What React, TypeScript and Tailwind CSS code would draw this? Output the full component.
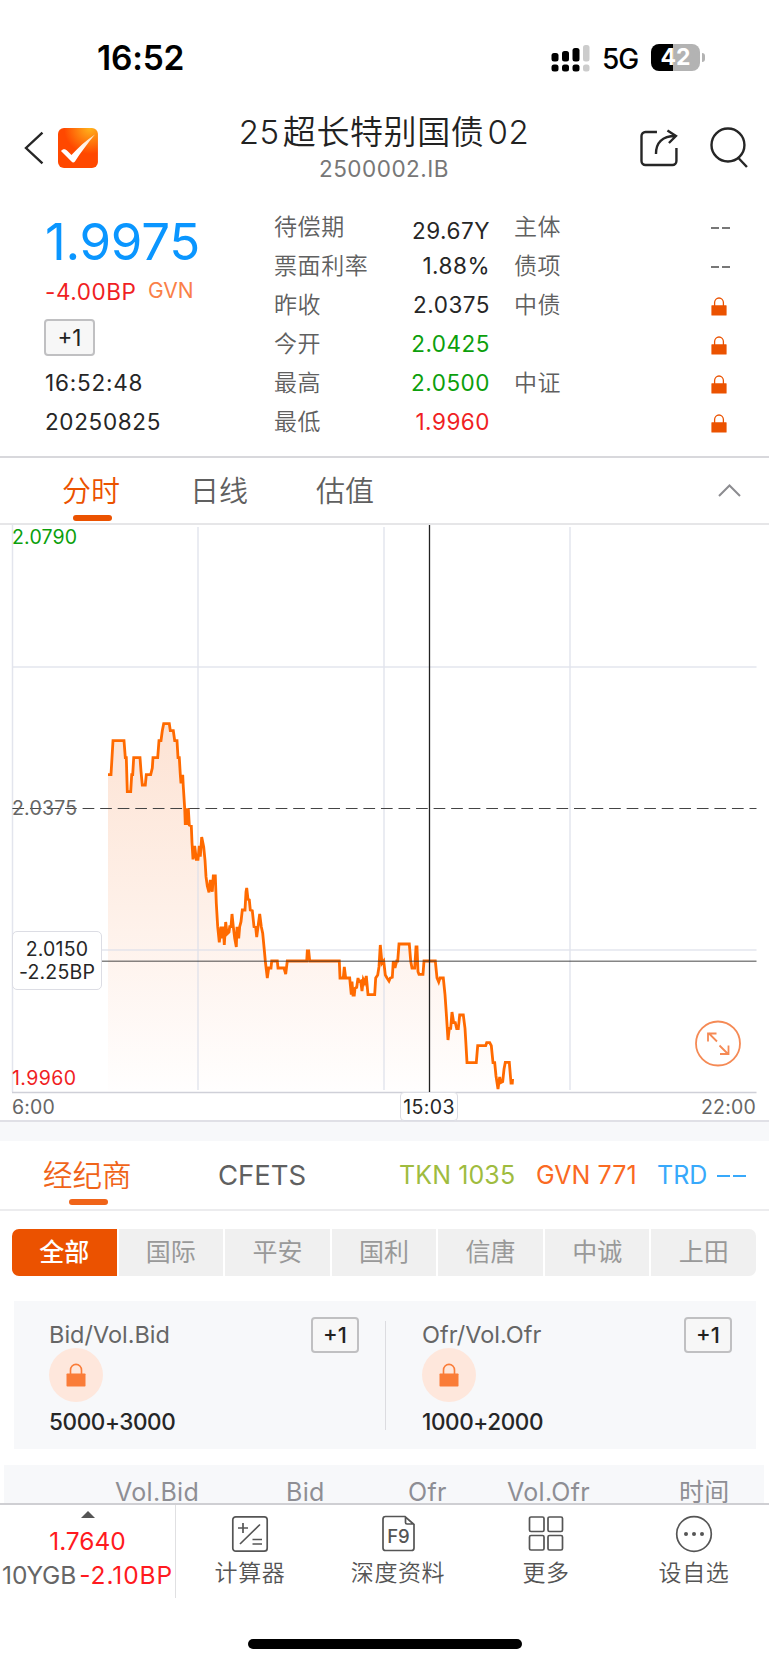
import type { ReactNode } from 'react';
import clsx from 'clsx';

// Coordinates are in the chart's own 769x594 box
const pricePoints: [number, number][] = [
  [108, 249.7], [111, 249.7], [112, 232.7], [113, 215.7], [124, 215.7], [125.3, 232.7], [126.3, 232.7],
  [127.3, 266.7], [130.7, 266.7], [131.7, 249.7], [132.7, 249.7], [133.7, 232.7], [140, 232.7], [141, 246.3],
  [142.3, 260], [145.3, 260], [146.3, 249.7], [150.7, 249.7], [152.3, 243], [153, 232.7], [157.7, 232.7],
  [159, 215.7], [161, 215.7], [162.3, 205.7], [163.7, 198.7], [169.3, 198.7], [170.3, 205.7], [173.3, 205.7],
  [174.7, 215.7], [177, 215.7], [178, 232.7], [179.3, 232.7], [180.3, 249.7], [181, 258.3], [182.7, 249.7],
  [183.3, 261.7], [184.7, 283.3], [185.3, 300], [186.7, 283.3], [187.3, 300], [188.3, 283.3], [189.3, 300],
  [191.3, 301], [192, 317.7], [193, 334.3], [194.7, 321], [196.3, 334.3], [198, 334.3], [199.3, 321],
  [200.3, 331.7], [201.7, 312], [203.7, 322], [205, 335], [206, 351.7], [207.3, 361], [209, 367.3],
  [210.3, 355], [212.3, 366.7], [213.3, 351], [215.3, 351], [216.3, 378.3], [217.7, 401.7], [219.3, 417.3],
  [221, 401.7], [222.3, 413.3], [223.3, 401.7], [224.3, 420], [225.7, 397], [227, 409], [229, 407],
  [229.7, 401.7], [231, 401.7], [232, 389], [233.3, 401.7], [234.7, 413.3], [236.3, 422], [237, 401.7],
  [238.7, 413.3], [239.7, 401.7], [241, 396.7], [242.3, 385], [245, 385], [246, 367], [246.7, 363],
  [248, 374.3], [249.3, 375], [250.3, 385], [252.3, 385.7], [254, 401.7], [255.7, 402.3], [256.7, 412],
  [258, 401.7], [259.7, 389], [261.3, 401.7], [262.7, 408.3], [264.3, 425], [265.3, 436], [267.3, 453],
  [268.7, 443], [271, 443], [271.7, 436], [277.3, 436], [278, 443], [284, 443], [285.7, 449],
  [287.3, 436], [306.7, 436], [307.3, 426], [308.7, 426], [309.7, 436], [339.3, 436], [340, 453],
  [343.3, 453], [344.3, 442], [345.7, 453], [349.7, 453], [351.3, 469.7], [352, 456.7], [353, 470],
  [354.3, 470], [355, 463.3], [356.7, 462.3], [358, 453], [359, 456.7], [360.7, 456], [362, 466],
  [363.3, 454.5], [364.7, 457.7], [366.3, 451], [368, 469.7], [374.7, 469.7], [375.7, 453], [377.7, 450],
  [379, 441.7], [380.3, 420], [382, 438.3], [383.7, 436], [385.3, 450], [387, 453], [389, 456],
  [390.3, 453], [392.3, 452.3], [393.3, 436], [395, 443], [396.7, 436], [397.7, 436], [399, 419],
  [409.3, 419], [410.7, 436], [412, 443], [414.7, 443], [416, 422], [417, 422], [418, 446.7],
  [419, 449.3], [423, 449.3], [424, 436], [435.3, 436], [437, 453], [438.7, 457], [440, 453],
  [443.3, 453], [445, 469.7], [446.3, 488.3], [448, 515], [449.3, 503.3], [450.7, 503.3], [452, 487],
  [453.7, 497.7], [455.3, 497.7], [456.7, 503.7], [458.3, 503.7], [459.7, 490], [463.3, 490], [465, 503.3],
  [466, 520], [467, 537.7], [476.3, 537.7], [477.7, 520.7], [485.7, 520.7], [486.7, 517.7], [489.7, 517.7],
  [491.3, 520.7], [493, 537.7], [494.7, 537.7], [496, 551], [498, 564], [499.7, 552], [500.7, 557.7],
  [502.7, 556.7], [504, 544.3], [505.3, 537.3], [509.3, 537.3], [511, 558], [512.3, 558], [512.6, 554],
];

const quoteLabels = ['待偿期', '票面利率', '昨收', '今开', '最高', '最低'];

const quoteValues = [
  { value: '29.67Y', className: 'text-[#262626] pt-[8px]' },
  { value: '1.88%', className: 'text-[#262626]' },
  { value: '2.0375', className: 'text-[#262626]' },
  { value: '2.0425', className: 'text-[#0c9f0c]' },
  { value: '2.0500', className: 'text-[#0c9f0c]' },
  { value: '1.9960', className: 'text-[#f01e23]' },
];

const ratings = [
  { label: '主体', locked: false },
  { label: '债项', locked: false },
  { label: '中债', locked: true },
  { label: '', locked: true },
  { label: '中证', locked: true },
  { label: '', locked: true },
];

const brokers = ['全部', '国际', '平安', '国利', '信唐', '中诚', '上田'];

const LockIcon = ({ className }: { className?: string }) => (
  <svg className={className} viewBox="0 0 16 19">
    <path d="M3.600 9V5.600a4.400 4.600 0 0 1 8.800 0V9" fill="none" stroke="currentColor" strokeWidth="1.300" />
    <rect x="0.400" y="8.200" width="15.200" height="10.400" rx="0.600" fill="currentColor" />
  </svg>
);

const PlusOne = ({ className }: { className?: string }) => (
  <div
    className={clsx(
      'flex items-center justify-center rounded-[4px] border-2 border-[#c0c0c2] bg-[#f7f7f7] text-[#222]',
      className
    )}
  >
    +1
  </div>
);

function StatusBar() {
  return (
    <div className="flex h-[115px] items-center pl-[97px] pr-[64px]">
      <div className="text-[33.500px] leading-[40px] font-semibold tracking-[-0.200px] text-black">16:52</div>
      <div className="ml-auto flex items-center">
        <svg className="h-[28px] w-[40px]" viewBox="0 0 40 28">
          <g fill="#000">
            <rect x="0.500" y="9" width="7" height="8.500" rx="2.500" />
            <rect x="11" y="7" width="7" height="10.500" rx="2.500" />
            <rect x="21.500" y="4" width="7" height="13.500" rx="2.500" />
            <rect x="0.500" y="20.500" width="7" height="7" rx="2.500" />
            <rect x="11" y="20.500" width="7" height="7" rx="2.500" />
            <rect x="21.500" y="20.500" width="7" height="7" rx="2.500" />
          </g>
          <g fill="#ccc">
            <rect x="32" y="1" width="6.500" height="16.500" rx="2.500" />
            <rect x="32" y="20.500" width="6.500" height="7" rx="2.500" />
          </g>
        </svg>
        <div className="mt-[2px] ml-[11px] w-[37px] text-[28px] leading-[30px] font-medium tracking-[-1px] text-black">5G</div>
        <div className="ml-[12px] flex h-[27px] w-[49px] items-center justify-center rounded-[8px] bg-linear-to-r from-black from-44% to-[#b3b3b3] to-44% text-[23px] leading-none font-bold text-white">
          42
        </div>
        <div className="ml-[2px] h-[9px] w-[3px] rounded-r-full bg-[#b3b3b3]" />
      </div>
    </div>
  );
}

function Header() {
  return (
    <div className="flex h-[85px] items-start pl-[24px] pr-[19px]">
      <svg className="mt-[16px] h-[34px] w-[20px]" viewBox="0 0 20 34" fill="none" stroke="#262626" strokeWidth="2.400">
        <path d="M18.500 1.500 2 17l16.500 15.500" />
      </svg>
      <svg className="mt-[13px] ml-[14.500px] h-[40px] w-[40px]" viewBox="0 0 40 40">
        <defs>
          <radialGradient id="logoBg" cx="0.8" cy="0" r="0.65">
            <stop offset="0" stopColor="#ffb41c" />
            <stop offset="1" stopColor="#ff4800" />
          </radialGradient>
          <linearGradient id="logoTick" x1="0" y1="1" x2="1" y2="0">
            <stop offset="0.4" stopColor="#fff" />
            <stop offset="1" stopColor="#ffe0c4" />
          </linearGradient>
        </defs>
        <rect width="40" height="40" rx="6" fill="url(#logoBg)" />
        <path d="M3 23c2-2.500 4.500-2 6.500 0l4 4C20 20 28 12.500 37 6.500 30 15 22.500 25 17 33.500c-1 1.500-2.500 1.500-3.500 0Z" fill="url(#logoTick)" />
      </svg>
      <div className="ml-[101.500px] w-[369px] text-center">
        <div className="mt-[-3px] text-[33px] leading-[40px] font-[350] tracking-[0.600px] text-[#222]">
          25<span className="mx-[3px]">超长特别国债</span>02
        </div>
        <div className="mt-[3px] text-[22.500px] leading-[28px] tracking-[0.500px] text-[#777]">2500002.IB</div>
      </div>
      <svg className="mt-[14px] ml-[71px] h-[38px] w-[40px]" viewBox="0 0 40 38" fill="none" stroke="#262626" strokeWidth="2.400">
        <path d="M18 3H6.500a4 4 0 0 0-4 4v25a4 4 0 0 0 4 4h27a4 4 0 0 0 4-4V19" />
        <path d="M17 25C17 14 23 7 36.500 7M28.500 1.500 37 7l-7 7" />
      </svg>
      <svg className="mt-[12px] ml-[31px] h-[42px] w-[40px]" viewBox="0 0 40 42" fill="none" stroke="#262626" strokeWidth="2.400">
        <circle cx="18" cy="18" r="16.500" />
        <path d="M28 30.500 37 40" />
      </svg>
    </div>
  );
}

function Quote() {
  return (
    <div className="flex h-[258px] border-b-2 border-[#d8d8dc]">
      <div className="w-[274px] pl-[45px] text-[22.500px] text-[#262626]">
        <div className="mt-[15px] h-[54px] text-[51px] leading-[54px] tracking-[-0.300px] text-[#0a96ff]">1.9975</div>
        <div className="mt-[9px] flex h-[28px] items-center leading-[28px] text-[#f01e23]">
          <span className="w-[103px] tracking-[0.550px]">-4.00BP</span>
          <span className="pb-[2px] text-[21px] text-[#fa8048]">GVN</span>
        </div>
        <PlusOne className="mt-[13px] -ml-px h-[37px] w-[51px]" />
        <div className="mt-[13px] leading-[28px] tracking-[0.800px]">16:52:48</div>
        <div className="mt-[11px] leading-[28px] tracking-[0.650px]">20250825</div>
      </div>
      <div className="w-[110px] pt-[8px] text-[23px] leading-[39px] font-[350] tracking-[0.600px] whitespace-nowrap text-[#606060]">
        {quoteLabels.map(label => (
          <div key={label}>{label}</div>
        ))}
      </div>
      <div className="w-[106px] pt-[7px] text-right text-[22.500px] tracking-[0.500px]">
        {quoteValues.map(row => (
          <div key={row.value} className={clsx('flex h-[39px] items-center justify-end', row.className)}>
            {row.value}
          </div>
        ))}
      </div>
      <div className="flex-1 pt-[8px] pr-[39px] pl-[24px]">
        {ratings.map((row, i) => (
          <div key={i} className="flex h-[39px] items-center justify-between text-[23px] font-[350] tracking-[0.600px] text-[#606060]">
            <span>{row.label}</span>
            {row.locked ? (
              <LockIcon className="mt-[2px] mr-[3px] h-[19px] w-[16px] text-[#eb5200]" />
            ) : (
              <span className="flex gap-[3px]">
                <i className="h-[2px] w-[8px] bg-[#777]" />
                <i className="h-[2px] w-[8px] bg-[#777]" />
              </span>
            )}
          </div>
        ))}
      </div>
    </div>
  );
}

function ChartTabs() {
  return (
    <div className="flex h-[67px] items-start border-b-2 border-[#e6e6e8] pl-[62px] text-[29px] leading-[40px] font-[350] text-[#606060]">
      <div className="flex w-[128px] flex-col items-start pt-[14px] text-[#eb5200]">
        分时
        <div className="mt-[3px] ml-[11px] h-[6px] w-[39px] rounded-[3px] bg-[#eb5200]" />
      </div>
      <div className="w-[126px] pt-[14px]">日线</div>
      <div className="pt-[14px]">估值</div>
      <svg className="mt-[26px] mr-[28px] ml-auto h-[13px] w-[23px]" viewBox="0 0 23 13" fill="none" stroke="#8c8c90" strokeWidth="2">
        <path d="m1 12 10.500-10.500L22 12" />
      </svg>
    </div>
  );
}

function PriceChart() {
  const line = pricePoints.map(p => p.join(',')).join(' ');

  return (
    <div className="relative h-[597px] border-b-2 border-[#e0e0e6] text-[19.500px] leading-[24px] tracking-[0.200px]">
      <svg className="block h-[594px] w-[769px]" viewBox="0 0 769 594">
        <defs>
          <linearGradient id="area" gradientUnits="userSpaceOnUse" x1="0" y1="198" x2="0" y2="566">
            <stop offset="0" stopColor="#fde3d4" />
            <stop offset="0.5" stopColor="#fef0e8" />
            <stop offset="1" stopColor="#fffefe" />
          </linearGradient>
        </defs>
        <polygon points={`108,566 ${line} 512.6,566`} fill="url(#area)" />
        <g stroke="#dcdfe8" strokeOpacity="0.800" strokeWidth="1.500">
          <path d="M12.500 0V567M198 2V565M384 2V565M570 2V565M12 142H756.500M12 425H756.500" />
        </g>
        <path d="M12 567.500H756.500" stroke="#cfd0d8" strokeWidth="1.500" />
        <path d="M12.400 283.500H756.500" stroke="#444" strokeWidth="1.200" strokeDasharray="11.700 5.850" />
        <polyline points={line} fill="none" stroke="#ff6a00" strokeWidth="2.800" />
        <path d="M12 436.200H756.500" stroke="#333" strokeOpacity="0.600" strokeWidth="1.400" />
        <path d="M429.500 0V567" stroke="#222" strokeWidth="1.300" />
        <g fill="none" stroke="#f58a55" strokeWidth="1.800">
          <circle cx="718" cy="518.500" r="22" />
          <path d="M717 516.500 708.500 508M708 516.500V508.500H716.500M719.500 520.500 728 529M728.500 520.500V529H720" />
        </g>
      </svg>
      <span className="absolute top-0 left-[12px] text-[#0c9f0c]">2.0790</span>
      <span className="absolute top-[271px] left-[12px] text-[#666]">2.0375</span>
      <div className="absolute top-[406px] left-[12px] h-[59px] w-[90px] rounded-[5px] border-[1.500px] border-[#dcdde4] bg-white pt-[6px] text-center leading-[23px] text-[#262626]">
        <div>2.0150</div>
        <div>-2.25BP</div>
      </div>
      <span className="absolute top-[541px] left-[12px] tracking-[0.400px] text-[#f01e23]">1.9960</span>
      <span className="absolute top-[570px] left-[12px] text-[#666]">6:00</span>
      <span className="absolute top-[567px] left-[400px] flex h-[29px] w-[58px] items-center justify-center rounded-[4px] border-[1.500px] border-[#dcdde4] bg-white pt-px tracking-[0.400px] text-[#262626]">
        15:03
      </span>
      <span className="absolute top-[570px] right-[13px] text-[#666]">22:00</span>
    </div>
  );
}

function BrokerTabs() {
  return (
    <div className="flex h-[70px] border-b-2 border-[#ececee] leading-[40px] whitespace-nowrap">
      <div className="w-[218px] pt-[14px] pl-[43px] text-[29.500px] font-[350] text-[#f06419]">
        经纪商
        <div className="mt-[4px] ml-[26px] h-[6px] w-[39px] rounded-[3px] bg-[#f06419]" />
      </div>
      <div className="w-[181px] pt-[14px] text-[27.500px] text-[#606060]">CFETS</div>
      <div className="w-[137px] pt-[14px] text-[25px] tracking-[0.100px] text-[#9fbc3f]">TKN 1035</div>
      <div className="w-[121px] pt-[14px] text-[25px] tracking-[0.100px] text-[#fa6a22]">GVN 771</div>
      <div className="flex pt-[14px] text-[25px] text-[#38a9fb]">
        TRD
        <span className="mt-[20px] ml-[10px] flex gap-[3px]">
          <i className="h-[2px] w-[13px] bg-[#38a9fb]" />
          <i className="h-[2px] w-[13px] bg-[#38a9fb]" />
        </span>
      </div>
    </div>
  );
}

function BrokerFilter() {
  return (
    <div className="mr-[13px] ml-[12px] mt-[18px] grid h-[47px] grid-cols-7 gap-[2px] overflow-hidden rounded-[7px] text-[25px]">
      {brokers.map((name, i) => (
        <div
          key={name}
          className={clsx(
            'flex items-center justify-center leading-none',
            i === 0 ? 'bg-[#eb5200] font-medium text-white' : 'bg-[#f0f0f0] text-[#999]'
          )}
        >
          {name}
        </div>
      ))}
    </div>
  );
}

function BestQuote({ label, volume }: { label: string; volume: string }) {
  return (
    <div className="w-[373px] shrink-0 pt-[16px] pl-[35px]">
      <div className="flex h-[32px]">
        <div className="w-[262px] pt-[4px] text-[23.500px] leading-[28px] text-[#666]">{label}</div>
        <PlusOne className="h-[36px] w-[48px] text-[22px] font-medium" />
      </div>
      <div className="-mt-px flex h-[54px] w-[54px] items-center justify-center rounded-full bg-[#fee7dc]">
        <LockIcon className="h-[24px] w-[20px] text-[#fa7c38]" />
      </div>
      <div className="mt-[6px] text-[22.500px] leading-[28px] font-medium tracking-[-0.400px] text-[#262626]">{volume}</div>
    </div>
  );
}

function MenuItem({ label, children }: { label: string; children: ReactNode }) {
  return (
    <div className="flex flex-1 flex-col items-center pt-[10px]">
      <svg className="h-[38px] w-[38px]" viewBox="0 0 38 38" fill="none" stroke="#555" strokeWidth="1.700">
        {children}
      </svg>
      <div className="mt-[6px] text-[23px] leading-[28px] font-[350] tracking-[0.600px] text-[#555]">{label}</div>
    </div>
  );
}

function BottomBar() {
  return (
    <div className="flex h-[95px] shrink-0 border-t-2 border-[#cfcfd3] bg-white pr-px">
      <div className="flex w-[176px] flex-col items-center border-r-[1.500px] border-[#e0e0e2] text-[24.500px] whitespace-nowrap">
        <div className="mt-[6px] h-0 w-0 border-x-[7px] border-b-[7px] border-x-transparent border-b-[#555]" />
        <div className="mt-[8px] leading-[30px] text-[#ff1a20]">1.7640</div>
        <div className="mt-[4px] flex gap-[3px] leading-[30px]">
          <span className="tracking-[-0.100px] text-[#666]">10YGB</span>
          <span className="tracking-[0.900px] text-[#ff1a20]">-2.10BP</span>
        </div>
      </div>
      <MenuItem label="计算器">
        <rect x="1.800" y="1.800" width="34.400" height="34.400" rx="3" />
        <path d="M7 13h10M12 8v10M9 29 29 9.500M21.500 24.500h9.500M21.500 29h9.500" />
      </MenuItem>
      <MenuItem label="深度资料">
        <path d="M26 1.500H6.500a2.500 2.500 0 0 0-2.500 2.500v29a2.500 2.500 0 0 0 2.500 2.500h26a2.500 2.500 0 0 0 2.500-2.500V9.500ZM26.500 2v5.500a1.500 1.500 0 0 0 1.500 1.500h7" />
        <text x="19.500" y="27.500" textAnchor="middle" fontSize="18.500" fontWeight="500" fill="#555" stroke="none">F9</text>
      </MenuItem>
      <MenuItem label="更多">
        <rect x="2.500" y="2" width="14.500" height="14.500" rx="1.500" />
        <rect x="21" y="2" width="14.500" height="14.500" rx="1.500" />
        <rect x="2.500" y="20.500" width="14.500" height="14.500" rx="1.500" />
        <rect x="21" y="20.500" width="14.500" height="14.500" rx="1.500" />
      </MenuItem>
      <MenuItem label="设自选">
        <circle cx="19" cy="19" r="17.300" />
        <g fill="#555" stroke="none">
          <circle cx="11" cy="19" r="2" />
          <circle cx="19" cy="19" r="2" />
          <circle cx="27" cy="19" r="2" />
        </g>
      </MenuItem>
    </div>
  );
}

export default function App() {
  return (
    <div className="flex h-[1665px] w-[769px] flex-col overflow-hidden bg-white font-['Inter','Noto_Sans_CJK_SC',sans-serif]">
      <StatusBar />
      <Header />
      <Quote />
      <ChartTabs />
      <PriceChart />
      <div className="h-[19px] bg-[#f7f8fa]" />
      <BrokerTabs />
      <BrokerFilter />

      <div className="mt-[25px] mr-[13px] ml-[14px] flex h-[148px] shrink-0 bg-[#f7f8fa]">
        <BestQuote label="Bid/Vol.Bid" volume="5000+3000" />
        <div className="-ml-[2px] mt-[20px] mr-px h-[109px] w-px shrink-0 bg-[#dcdce0]" />
        <BestQuote label="Ofr/Vol.Ofr" volume="1000+2000" />
      </div>

      {/* Table header, cut off by the bottom bar */}
      <div className="mr-[5px] ml-[4px] mt-[16px] flex h-[38px] shrink-0 overflow-hidden bg-[#f7f8fa] pt-[17px] pl-[111px] text-[25px] leading-[21px] tracking-[0.300px] text-[#8e8e94]">
        <div className="w-[171px]">Vol.Bid</div>
        <div className="w-[122px]">Bid</div>
        <div className="w-[99px]">Ofr</div>
        <div className="w-[172px]">Vol.Ofr</div>
        <div>时间</div>
      </div>
      <BottomBar />
      <div className="mx-auto mt-[41px] h-[10px] w-[274px] shrink-0 rounded-full bg-black" />
    </div>
  );
}
